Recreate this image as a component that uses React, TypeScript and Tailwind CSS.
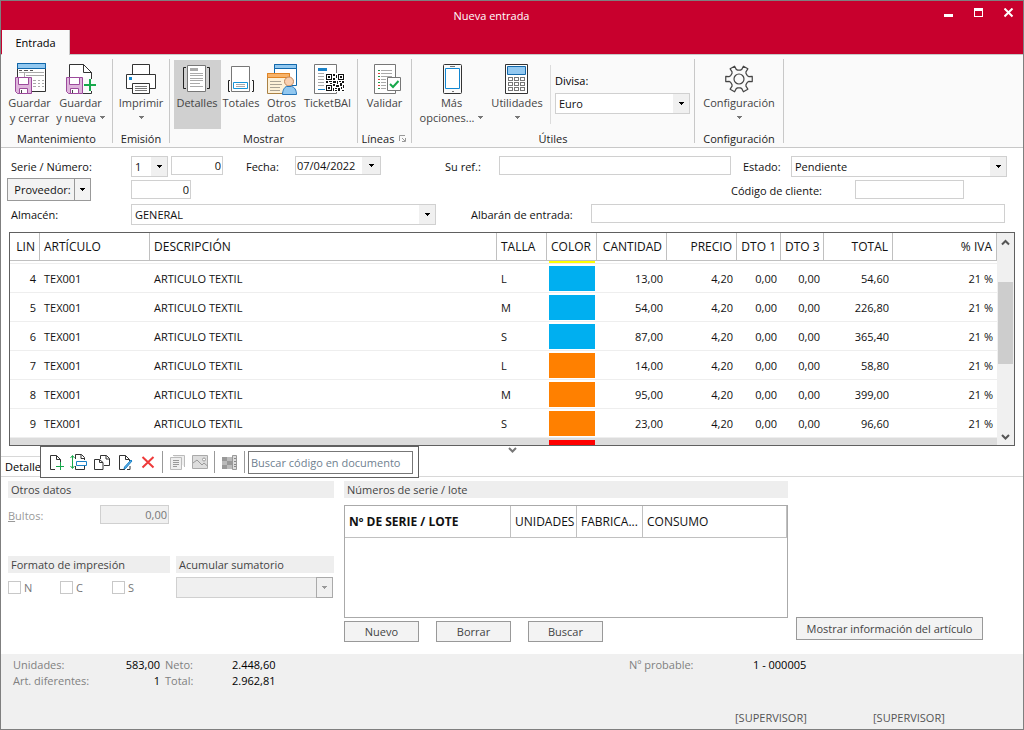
import { useState } from 'react';
import type { ReactNode } from 'react';
import clsx from 'clsx';

const LINES = [
  { lin: 4, talla: 'L', color: 'bg-[#00aff0]', cantidad: '13,00', total: '54,60' },
  { lin: 5, talla: 'M', color: 'bg-[#00aff0]', cantidad: '54,00', total: '226,80' },
  { lin: 6, talla: 'S', color: 'bg-[#00aff0]', cantidad: '87,00', total: '365,40' },
  { lin: 7, talla: 'L', color: 'bg-[#ff8000]', cantidad: '14,00', total: '58,80' },
  { lin: 8, talla: 'M', color: 'bg-[#ff8000]', cantidad: '95,00', total: '399,00' },
  { lin: 9, talla: 'S', color: 'bg-[#ff8000]', cantidad: '23,00', total: '96,60' },
];

const COLUMNS = [
  { label: 'LIN', width: 'w-[30px]', right: true },
  { label: 'ARTÍCULO', width: 'w-[110px]', right: false },
  { label: 'DESCRIPCIÓN', width: '', right: false },
  { label: 'TALLA', width: 'w-[50px]', right: false },
  { label: 'COLOR', width: 'w-[50px]', right: false },
  { label: 'CANTIDAD', width: 'w-[70px]', right: true },
  { label: 'PRECIO', width: 'w-[70px]', right: true },
  { label: 'DTO 1', width: 'w-[44px]', right: true },
  { label: 'DTO 3', width: 'w-[43px]', right: true },
  { label: 'TOTAL', width: 'w-[69px]', right: true },
  { label: '% IVA', width: 'w-[104px]', right: true },
];

/* ---------- Icons ---------- */

function Icon({ children, size = 34 }: { children: ReactNode; size?: number }) {
  return (
    <svg width={size} height={size} viewBox={`0 0 ${size} ${size}`} fill="none" className="shrink-0" aria-hidden="true">
      {children}
    </svg>
  );
}

function Caret({ className = 'fill-black' }: { className?: string }) {
  return (
    <svg width="5" height="3" viewBox="0 0 5 3" className={clsx('shrink-0', className)} shapeRendering="crispEdges" aria-hidden="true">
      <path d="M0 0h5v1H4v1H3v1H2V2H1V1H0z" />
    </svg>
  );
}

function Floppy() {
  return (
    <g>
      <path d="M2.5 16.5h16v16h-14l-2-2z" fill="#dfb6dc" stroke="#9c4a9c" />
      <path d="M5.5 16.5h10v7h-10z" fill="#fff" stroke="#9c4a9c" />
      <path d="M6.5 27.5h8v5h-8z" fill="#fff" stroke="#9c4a9c" />
      <path d="M8.5 29v3" stroke="#444" />
    </g>
  );
}

function SaveCloseIcon() {
  return (
    <Icon>
      <path d="M4.5 2.5h28v28h-28z" fill="#fff" stroke="#333" />
      <path d="M4.5 2.5h28v5h-28z" fill="#92c8f0" stroke="#0f67ab" />
      <path d="M6 9.5h3m2 0h4m2 0h3" stroke="#555" />
      <path d="M6 11.5h25M11.5 12v5M13 14.5h18M20 19.5h3m2 0h2m2 0h2M20 22.5h3m2 0h2m2 0h2M20 25.5h3m2 0h2m2 0h2" stroke="#aaa" />
      <Floppy />
    </Icon>
  );
}

function SaveNewIcon() {
  return (
    <Icon>
      <path d="M5.5 16V3.5h14l8 8V18M19 32.5h8.5V30" fill="#fff" stroke="#333" />
      <path d="M19.5 3.5v8h8z" fill="#fff" stroke="#333" />
      <Floppy />
      <path d="M26 18v12M20 24h12" stroke="#17a84b" strokeWidth="2" />
    </Icon>
  );
}

function PrintIcon() {
  return (
    <Icon>
      <path d="M8.5 13.5v-10h17v10" fill="#fff" stroke="#333" />
      <path d="M2.5 13.5h29v14h-29z" fill="#fff" stroke="#333" />
      <path d="M5 16h3v3H5z" fill="#1287d2" />
      <path d="M8.5 22.5h17v10h-17z" fill="#fff" stroke="#333" />
      <path d="M11 25.5h12m-12 2h12m-12 2h12" stroke="#777" />
    </Icon>
  );
}

function DetailsIcon() {
  return (
    <Icon>
      <path d="M6 6.5H3.5v21H6M27 6.5h2.5v21H27" stroke="#222" />
      <path d="M7.5 4.5h18v26h-18z" fill="#fff" stroke="#777" />
      <path d="M10 7h8v3h-8z" fill="#aaa" />
      <path d="M10 12.5h13m-13 2h13m-13 3h13m-13 2h13m-13 3h10m-10 3h13" stroke="#aaa" />
    </Icon>
  );
}

function TotalsIcon() {
  return (
    <Icon>
      <path d="M6 19.5H4.5v11H6M28 19.5h1.5v11H28" stroke="#222" />
      <path d="M7.5 5.5h18v25h-18z" fill="#fff" stroke="#777" />
      <path d="M9.5 21.5h14v6h-14z" fill="#fff" stroke="#1694d9" />
      <path d="M12 23.5h9m-9 2h9" stroke="#aaa" />
    </Icon>
  );
}

function OtherDataIcon() {
  return (
    <Icon>
      <path d="M9.5 3.5h22v21h-22z" fill="#fff" stroke="#1268ab" />
      <path d="M9.5 3.5h22v4h-22z" fill="#92c8f0" stroke="#1268ab" />
      <path d="M2.5 12.5h22v20h-22z" fill="#fdf1d8" stroke="#a98145" />
      <path d="M2.5 12.5h22v4h-22z" fill="#f8b369" stroke="#e08425" />
      <path d="M5 20.5h11m-11 3h12m-12 3h10m-10 3h10" stroke="#a9a294" />
      <circle cx="24" cy="20.5" r="4.5" fill="#f9d0b0" stroke="#c08860" />
      <path d="M17.5 33.5c0-4 2-7.5 4-8h5c3 .5 5 3.5 5 8z" fill="#92c8f0" stroke="#2675b8" />
    </Icon>
  );
}

function TicketIcon() {
  return (
    <Icon>
      <path d="M3.5 3.5h22v29h-22z" fill="#fff" stroke="#777" />
      <path d="M7 7h9v3H7z" fill="#1a82c8" />
      <path d="M7 12.5h6m-6 3h6m-6 3h6m-6 3h6m-6 3h6" stroke="#aaa" />
      <path d="M7 28.5h7" stroke="#1a82c8" />
      <path d="M14 12h20v19H14z" fill="#fff" />
      <g fill="#111" shapeRendering="crispEdges">
        <path fillRule="evenodd" d="M15 13h6v6h-6zm1 1v4h4v-4zM27 13h6v6h-6zm1 1v4h4v-4zM15 24h6v6h-6zm1 1v4h4v-4z" />
        <path d="M17 15h2v2h-2zM29 15h2v2h-2zM17 26h2v2h-2z" />
        <path d="M22 13h2v2h-2zM25 14h1v3h-1zM22 17h2v2h-2zM15 20h2v2h-2zM18 20h3v1h-3zM19 22h2v1h-2zM22 20h3v2h-3zM26 20h1v3h-1zM28 20h2v1h-2zM31 20h2v2h-2zM22 23h2v2h-2zM25 24h3v2h-3zM29 22h2v3h-2zM32 24h1v3h-1zM22 27h1v3h-1zM24 27h2v1h-2zM27 27h2v3h-2zM24 29h2v1h-2zM30 26h1v2h-1zM31 29h2v1h-2z" />
      </g>
    </Icon>
  );
}

function ValidateIcon() {
  return (
    <Icon>
      <path d="M6.5 3.5h21v29h-21z" fill="#fff" stroke="#777" />
      <path d="M10 9.5h2m-2 6h2m-2 6h2m-2 6h2" stroke="#1a9a4a" />
      <path d="M10 12.5h2m-2 6h2m-2 6h2" stroke="#e0403a" />
      <path d="M13 9.5h11m-11 3h11m-11 3h11m-11 3h5m-5 3h5m-5 3h5m-5 3h5" stroke="#aaa" />
      <path d="M19.5 16.5h13v13h-13z" fill="#fff" stroke="#777" />
      <path d="M22 23l3 3 5.5-6" stroke="#17a84b" strokeWidth="2" />
    </Icon>
  );
}

function PhoneIcon() {
  return (
    <Icon>
      <rect x="8.5" y="3.5" width="18" height="29" rx="1" fill="#fafafa" stroke="#333" />
      <path d="M10.5 7.5h14v20h-14z" fill="#fff" stroke="#1287d2" />
      <path d="M15 5.5h5m-3 25h2" stroke="#777" />
    </Icon>
  );
}

function CalculatorIcon() {
  return (
    <Icon>
      <path d="M5.5 3.5h22v29h-22z" fill="#fff" stroke="#333" />
      <path d="M7.5 5.5h18v8h-18z" fill="#92c8f0" stroke="#1268ab" />
      {[16, 21, 26].map(y =>
        [8, 14, 20].map(x => <rect key={`${x}-${y}`} x={x + 0.5} y={y + 0.5} width="4" height="3" stroke="#777" />)
      )}
    </Icon>
  );
}

// Six teeth, one every 60 degrees
const GEAR_POINTS = [0, 60, 120, 180, 240, 300]
  .flatMap(angle => [[-21, 9], [-14, 10], [-11, 13.5], [11, 13.5], [14, 10], [21, 9]].map(([offset, r]) => {
    const a = ((angle + offset) * Math.PI) / 180;
    return `${(17 + r * Math.cos(a)).toFixed(2)},${(18 + r * Math.sin(a)).toFixed(2)}`;
  }))
  .join(' ');

function GearIcon() {
  return (
    <Icon>
      <polygon points={GEAR_POINTS} stroke="#444" strokeWidth="1.2" strokeLinejoin="round" />
      <circle cx="17" cy="18" r="5" stroke="#444" strokeWidth="1.2" />
    </Icon>
  );
}

/* ---------- Ribbon ---------- */

interface RibbonButtonProps {
  icon: ReactNode;
  lines: string[];
  width: string;
  menu?: boolean;
  active?: boolean;
}

function RibbonButton({ icon, lines, width, menu, active }: RibbonButtonProps) {
  const inlineCaret = menu && lines.length > 1;
  return (
    <button
      type="button"
      className={clsx('flex h-[69px] flex-col items-center whitespace-nowrap pt-px leading-[15px] text-[#444]', width, active ? 'bg-[#d0d0d0]' : 'hover:bg-[#e6e6e6]')}
    >
      {icon}
      {lines.map((line, i) => (
        <span key={line} className="flex items-center gap-1">
          {line}
          {inlineCaret && i === lines.length - 1 && <Caret className="fill-[#777]" />}
        </span>
      ))}
      {menu && !inlineCaret && (
        <span className="flex h-[15px] items-center">
          <Caret className="fill-[#777]" />
        </span>
      )}
    </button>
  );
}

function RibbonGroup({ title, width, launcher, children }: { title: string; width: string; launcher?: boolean; children: ReactNode }) {
  return (
    <>
      <div className={clsx('flex flex-col', width)}>
        <div className="flex h-[70px] justify-center pt-px">{children}</div>
        <div className="flex h-[18px] items-center justify-center gap-1 text-[#222]">
          {title}
          {launcher && (
            <svg width="9" height="9" viewBox="0 0 9 9" fill="none" className="shrink-0" aria-hidden="true">
              <path d="M1.5 7V1.5H7M4 4l3 3M7.5 4v3.5H4" stroke="#999" />
            </svg>
          )}
        </div>
      </div>
      <div className="h-[84px] w-px bg-[#c8c8c8]" />
    </>
  );
}

/* ---------- Form controls ---------- */

function Select({ id, options, className }: { id: string; options: string[]; className?: string }) {
  return (
    <div className={clsx('relative h-[21px] border border-[#d0d0d0] bg-white', className)}>
      <select id={id} className="block h-full w-full appearance-none bg-transparent pr-4 pl-[3px] outline-none">
        {options.map(o => <option key={o}>{o}</option>)}
      </select>
      <span className="pointer-events-none absolute inset-y-0 right-0 flex w-4 items-center justify-center bg-[#f0f0f0]">
        <Caret />
      </span>
    </div>
  );
}

const inputClass = 'h-[19px] border border-[#d0d0d0] bg-white px-1 outline-none';

function PushButton({ children, className }: { children: ReactNode; className: string }) {
  return (
    <button type="button" className={clsx('border border-[#999] bg-[#f3f3f3] whitespace-nowrap text-[#444]', className)}>
      {children}
    </button>
  );
}

function SectionTitle({ children }: { children: ReactNode }) {
  return <h2 className="h-[17px] bg-[#eee] px-[3px] leading-[17px] text-[#444]">{children}</h2>;
}

function DocumentForm() {
  const [fecha, setFecha] = useState('07/04/2022');

  return (
    <div className="pr-4 pl-[10px] pt-2">
      <div className="flex h-[22px] items-start">
        <label htmlFor="serie" className="w-[120px] leading-[22px]">Serie / Número:</label>
        <Select id="serie" options={['1']} className="w-[37px]" />
        <input aria-label="Número" defaultValue="0" className={clsx(inputClass, 'ml-[3px] w-[52px] pr-px text-right')} />
        <label htmlFor="fecha" className="ml-[23px] w-[49px] leading-[22px]">Fecha:</label>
        <div className="flex h-[19px] w-[86px] border border-[#d0d0d0]">
          <input id="fecha" value={fecha} onChange={e => setFecha(e.target.value)} className="w-0 flex-1 pl-px outline-none" />
          <button type="button" aria-label="Abrir calendario" className="flex w-[18px] items-center justify-center bg-[#f0f0f0]">
            <Caret />
          </button>
        </div>
        <label htmlFor="ref" className="ml-16 w-[54px] leading-[22px]">Su ref.:</label>
        <input id="ref" className={clsx(inputClass, 'min-w-0 flex-1')} />
        <label htmlFor="estado" className="ml-3 w-12 leading-[22px]">Estado:</label>
        <Select id="estado" options={['Pendiente']} className="w-[216px]" />
      </div>

      <div className="flex h-[26px] items-start">
        <div className="-ml-1 flex h-[23px] w-[84px] border border-[#999] bg-[#f3f3f3]">
          <button type="button" className="flex-1 border-r border-[#999] pl-[3px]">Proveedor:</button>
          <button type="button" aria-label="Opciones de proveedor" className="flex w-[15px] items-center justify-center">
            <Caret />
          </button>
        </div>
        <input aria-label="Código de proveedor" defaultValue="0" className={clsx(inputClass, 'mt-[2px] ml-10 w-[60px] pr-px text-right')} />
        <label htmlFor="cliente" className="ml-auto w-[124px] leading-[26px]">Código de cliente:</label>
        <input id="cliente" className={clsx(inputClass, 'mt-[2px] mr-[43px] w-[109px]')} />
      </div>

      <div className="flex h-[22px] items-start">
        <label htmlFor="almacen" className="w-[120px] leading-[22px]">Almacén:</label>
        <Select id="almacen" options={['GENERAL']} className="w-[305px]" />
        <label htmlFor="albaran" className="ml-[35px] w-[120px] leading-[22px]">Albarán de entrada:</label>
        <input id="albaran" className={clsx(inputClass, 'mr-[2px] min-w-0 flex-1')} />
      </div>
    </div>
  );
}

function LinesTable() {
  return (
    <div className="mx-2 mt-[6px] flex border border-[#606060] bg-white">
      <table className="w-full flex-1 table-fixed border-separate border-spacing-0">
        <thead>
          <tr className="h-7">
            {COLUMNS.map(c => (
              <th
                key={c.label}
                scope="col"
                className={clsx('border-r border-b border-[#c0c0c0] px-1 py-0 text-[12px] font-normal whitespace-nowrap', c.width, c.right ? 'text-right' : 'text-left')}
              >
                {c.label}
              </th>
            ))}
          </tr>
        </thead>
        <tbody className="[&_td]:py-0">
          {/* Rows scrolled half out of view show only their colour */}
          <tr className="h-[3px] [&>td]:border-b [&>td]:border-[#eee]">
            <td colSpan={4} />
            <td className="px-[2px]"><div className="h-[2px] bg-[#ffff00]" /></td>
            <td colSpan={6} />
          </tr>
          {LINES.map(line => (
            <tr key={line.lin} className="h-[29px] whitespace-nowrap [&>td]:border-b [&>td]:border-[#eee]">
              <td className="px-1 text-right">{line.lin}</td>
              <td className="px-1">TEX001</td>
              <td className="px-1">ARTICULO TEXTIL</td>
              <td className="px-1">{line.talla}</td>
              <td className="px-[2px]"><div className={clsx('h-[25px]', line.color)} /></td>
              <td className="px-1 text-right">{line.cantidad}</td>
              <td className="px-1 text-right">4,20</td>
              <td className="px-1 text-right">0,00</td>
              <td className="px-1 text-right">0,00</td>
              <td className="px-1 text-right">{line.total}</td>
              <td className="px-1 text-right">21 %</td>
            </tr>
          ))}
          <tr className="h-[7px] bg-[#dcdcdc]">
            <td colSpan={4} />
            <td className="px-[2px] align-bottom"><div className="h-[5px] bg-[#ff0000]" /></td>
            <td colSpan={6} />
          </tr>
        </tbody>
      </table>
      <div className="flex w-[17px] shrink-0 flex-col items-center bg-[#f0f0f0]">
        <svg width="9" height="49" viewBox="0 0 9 49" fill="none" aria-hidden="true"><path d="M1 11.5L4.5 8 8 11.5" stroke="#555" strokeWidth="2" /></svg>
        <div className="h-[82px] w-[15px] bg-[#cdcdcd]" />
        <svg width="9" height="14" viewBox="0 0 9 14" fill="none" className="mt-auto" aria-hidden="true"><path d="M1 4l3.5 3.5L8 4" stroke="#555" strokeWidth="2" /></svg>
      </div>
    </div>
  );
}

function ToolButton({ label, children }: { label: string; children: ReactNode }) {
  return (
    <button type="button" aria-label={label} className="flex h-5 w-[23px] items-center justify-center">
      <Icon size={18}>{children}</Icon>
    </button>
  );
}

function FloatingToolbar() {
  return (
    <div className="absolute top-0 left-[39px] flex h-8 w-[379px] items-center border border-[#606060] bg-white pl-[3px]">
      <ToolButton label="Nueva línea">
        <path d="M8 16.5H3.5v-14h6l4 4V9M9.5 2.5v4h4" stroke="#333" />
        <path d="M13.5 9v8M9 13.5h8" stroke="#17a84b" />
      </ToolButton>
      <ToolButton label="Insertar línea">
        <path d="M5.5 6V1.5h6l3 3V7M11 1.5v4h4M5.5 13v3.5h9V13" stroke="#333" />
        <path d="M6.5 8.5h10v4h-10z" fill="#fff" stroke="#1a82c8" />
        <path d="M2.5 3v12M.5 5l2-2.5 2 2.5M.5 13l2 2.5 2-2.5" stroke="#17a84b" />
      </ToolButton>
      <ToolButton label="Duplicar línea">
        <path d="M7.5 6V2.5h6l3 3v7H11M13 2.5V6h3.5" stroke="#333" />
        <path d="M1.5 6.5h5l3.5 3v7H1.5zM6.5 6.5v3H10" fill="#fff" stroke="#333" />
      </ToolButton>
      <ToolButton label="Modificar línea">
        <path d="M9 16.5H3.5v-14h6l4 4V8M9.5 2.5v4h4M14 13v3.5h-3" stroke="#333" />
        <path d="M16 8l-6.5 7.5L8 16l.5-2L15 7z" fill="#5eaee6" stroke="#1a82c8" />
      </ToolButton>
      <ToolButton label="Borrar línea">
        <path d="M3.5 4l11 10.5M14.5 4l-11 10.5" stroke="#ee3a3a" strokeWidth="2" />
      </ToolButton>
      <div className="mr-[2px] ml-[3px] h-[22px] w-px bg-[#999]" />
      <ToolButton label="Notas">
        <path d="M5 2.5h11.5V14M2.5 4.5h11v12h-11z" fill="#eee" stroke="#bbb" />
        <path d="M5 7.5h6m-6 2h6m-6 2h6m-6 2h4" stroke="#999" />
      </ToolButton>
      <ToolButton label="Imagen">
        <path d="M1.5 2.5h15v13h-15z" fill="#ddd" stroke="#aaa" />
        <path d="M2 10l4-3 5 5 2-2 3.5 3" stroke="#999" />
        <circle cx="13" cy="6.5" r="1.5" fill="#fff" stroke="#999" />
      </ToolButton>
      <div className="mx-[3px] h-[22px] w-px bg-[#999]" />
      <ToolButton label="Tallas y colores">
        <path d="M1 4h10v12H1z" fill="#bbb" />
        <path d="M1 4h5v4H1zM6 8h5v4H6zM1 12h5v4H1z" fill="#999" />
        <path d="M11.5 2.5h4v14h-4z" fill="#ddd" stroke="#999" />
        <path d="M13 5.5h2m-2 3h2m-2 3h2m-2 2h2" stroke="#888" />
      </ToolButton>
      <div className="ml-[3px] h-[22px] w-px bg-[#999]" />
      <input
        aria-label="Buscar código en documento"
        placeholder="Buscar código en documento"
        className="mr-[5px] ml-[3px] h-[23px] min-w-0 flex-1 border border-[#777] px-[2px] outline-none placeholder:text-[#6f7f90]"
      />
    </div>
  );
}

function DetailPanel() {
  return (
    <div className="flex pt-1 pb-3 pl-[7px]">
      <div className="w-[326px] shrink-0">
        <SectionTitle>Otros datos</SectionTitle>
        <div className="mt-[7px] flex h-[19px]">
          <label htmlFor="bultos" className="w-[92px] leading-[21px] text-[#999]"><u>B</u>ultos:</label>
          <input id="bultos" disabled defaultValue="0,00" className="w-[69px] border border-[#d0d0d0] bg-[#f0f0f0] pr-px text-right text-[#777]" />
        </div>
        <div className="mt-8 flex gap-[6px]">
          <fieldset className="w-[162px]" disabled>
            <SectionTitle>Formato de impresión</SectionTitle>
            <div className="mt-2 flex">
              {['N', 'C', 'S'].map(f => (
                <label key={f} className="flex h-[13px] w-[52px] items-center gap-[3px] text-[#777]">
                  <input type="checkbox" className="h-[13px] w-[13px] appearance-none border border-[#c8c8c8] bg-white" />
                  {f}
                </label>
              ))}
            </div>
          </fieldset>
          <div className="flex-1">
            <SectionTitle>Acumular sumatorio</SectionTitle>
            <div className="relative mt-1 mr-px h-[21px]">
              <select disabled aria-label="Acumular sumatorio" className="block h-full w-full appearance-none border border-[#d0d0d0] bg-[#f0f0f0] opacity-100" />
              <span className="pointer-events-none absolute inset-y-0 right-0 flex w-[17px] items-center justify-center border border-[#aaa] bg-[#f0f0f0]">
                <Caret className="fill-[#999]" />
              </span>
            </div>
          </div>
        </div>
      </div>

      <div className="ml-[10px] min-w-0 flex-1">
        <SectionTitle>Números de serie / lote</SectionTitle>
        <div className="mt-[7px] h-[113px] border border-[#aaa] text-[12px]">
          <table className="w-full table-fixed border-separate border-spacing-0 text-left">
            <thead>
              <tr className="h-8 whitespace-nowrap [&>th]:border-r [&>th]:border-b [&>th]:border-[#c0c0c0] [&>th]:px-1 [&>th]:py-0">
                <th scope="col" className="w-[166px]">Nº DE SERIE / LOTE</th>
                <th scope="col" className="w-[66px] font-normal">UNIDADES</th>
                <th scope="col" className="w-[66px] font-normal">FABRICA...</th>
                <th scope="col" className="font-normal">CONSUMO</th>
              </tr>
            </thead>
          </table>
        </div>
        <div className="mt-[3px] flex gap-[17px]">
          <PushButton className="h-[21px] w-[75px]">Nuevo</PushButton>
          <PushButton className="h-[21px] w-[75px]">Borrar</PushButton>
          <PushButton className="h-[21px] w-[75px]">Buscar</PushButton>
        </div>
      </div>

      <div className="flex w-[235px] shrink-0 flex-col justify-end pb-[2px] pl-2">
        <PushButton className="h-[23px] w-[187px]">Mostrar información del artículo</PushButton>
      </div>
    </div>
  );
}

function StatusFooter() {
  return (
    <footer className="flex flex-1 flex-col bg-[#f0f0f0] px-3 pt-[3px] leading-4">
      <div className="flex">
        <dl className="grid grid-cols-[87px_60px_72px_44px] text-[#808080]">
          <dt>Unidades:</dt>
          <dd className="text-right text-black">583,00</dd>
          <dt className="pl-[5px]">Neto:</dt>
          <dd className="text-black">2.448,60</dd>
          <dt>Art. diferentes:</dt>
          <dd className="text-right text-black">1</dd>
          <dt className="pl-[5px]">Total:</dt>
          <dd className="text-black">2.962,81</dd>
        </dl>
        <div className="ml-auto flex w-[382px]">
          <span className="w-[124px] text-[#808080]">Nº probable:</span>
          <span className="text-black">1 - 000005</span>
        </div>
      </div>
      <div className="mt-auto flex justify-end pb-[3px] text-[#555]">
        <span className="w-[138px]">[SUPERVISOR]</span>
        <span className="w-[138px]">[SUPERVISOR]</span>
      </div>
    </footer>
  );
}

export default function App() {
  return (
    <div className="flex min-h-screen flex-col border border-[#7f7f7f] bg-white font-['Open_Sans','Noto_Sans',sans-serif] text-[11px] leading-[15px] text-[#111]">
      {/* Title bar */}
      <header className="flex h-[29px] items-start bg-[#c8002d] text-white">
        <h1 className="flex-1 pt-[7px] pl-11 text-center">Nueva entrada</h1>
        <div className="flex gap-[9px] pt-[7px] pr-1">
          <button type="button" aria-label="Minimizar" className="flex w-[21px] justify-center">
            <svg width="10" height="10" viewBox="0 0 10 10" aria-hidden="true"><path d="M0 6h9v3H0z" fill="#fff" /></svg>
          </button>
          <button type="button" aria-label="Maximizar" className="flex w-[21px] justify-center">
            <svg width="10" height="10" viewBox="0 0 10 10" aria-hidden="true"><path d="M0 0h9v9H0zM1 3v5h7V3z" fill="#fff" fillRule="evenodd" /></svg>
          </button>
          <button type="button" aria-label="Cerrar" className="flex w-[21px] justify-center">
            <svg width="10" height="10" viewBox="0 0 10 10" fill="none" aria-hidden="true"><path d="M.5.5l8 8M8.500.5l-8 8" stroke="#fff" strokeWidth="2" /></svg>
          </button>
        </div>
      </header>

      {/* Ribbon tabs */}
      <nav className="flex h-[25px] bg-[#c8002d]">
        <div className="w-px border-b border-[#c8c8c8]" />
        <button type="button" className="w-[68px] border-r border-[#c8c8c8] bg-[#fafafa] text-black">Entrada</button>
        <div className="flex-1 border-b border-[#c8c8c8]" />
      </nav>

      {/* Ribbon */}
      <div className="flex h-[93px] border-b border-[#c8c8c8] bg-[#fafafa] pt-1">
        <RibbonGroup title="Mantenimiento" width="w-[111px]">
          <RibbonButton icon={<SaveCloseIcon />} lines={['Guardar', 'y cerrar']} width="w-[50px]" />
          <RibbonButton icon={<SaveNewIcon />} lines={['Guardar', 'y nueva']} width="mr-[2px] w-[52px]" menu />
        </RibbonGroup>
        <RibbonGroup title="Emisión" width="w-14">
          <RibbonButton icon={<PrintIcon />} lines={['Imprimir']} width="w-[50px]" menu />
        </RibbonGroup>
        <RibbonGroup title="Mostrar" width="w-[187px]">
          <RibbonButton icon={<DetailsIcon />} lines={['Detalles']} width="w-[47px]" active />
          <RibbonButton icon={<TotalsIcon />} lines={['Totales']} width="w-[41px]" />
          <RibbonButton icon={<OtherDataIcon />} lines={['Otros', 'datos']} width="w-[40px]" />
          <RibbonButton icon={<TicketIcon />} lines={['TicketBAI']} width="w-[52px]" />
        </RibbonGroup>
        <RibbonGroup title="Líneas" width="w-[53px]" launcher>
          <RibbonButton icon={<ValidateIcon />} lines={['Validar']} width="w-[46px]" />
        </RibbonGroup>
        <RibbonGroup title="Útiles" width="w-[282px]">
          <RibbonButton icon={<PhoneIcon />} lines={['Más', 'opciones...']} width="w-[71px]" menu />
          <RibbonButton icon={<CalculatorIcon />} lines={['Utilidades']} width="w-[60px]" menu />
          <div className="mr-1 ml-[3px] mt-[5px] h-[59px] w-px bg-[#dcdcdc]" />
          <div className="w-[135px] pt-[13px]">
            <label htmlFor="divisa" className="block h-5 text-black">Divisa:</label>
            <Select id="divisa" options={['Euro']} />
          </div>
        </RibbonGroup>
        <RibbonGroup title="Configuración" width="w-[88px]">
          <RibbonButton icon={<GearIcon />} lines={['Configuración']} width="w-[80px]" menu />
        </RibbonGroup>
      </div>

      <DocumentForm />
      <LinesTable />

      {/* Detail tab strip, with the line toolbar hanging over it */}
      <div className="relative flex h-[31px] justify-center border-b border-[#d8d8d8]">
        <svg width="9" height="9" viewBox="0 0 9 9" fill="none" aria-hidden="true"><path d="M1 2l3.5 3.5L8 2" stroke="#777" strokeWidth="2" /></svg>
        <button type="button" className="absolute bottom-0 left-0 h-5 w-[46px] border-t border-[#d8d8d8] pl-1 text-left text-black">Detalle</button>
        <FloatingToolbar />
      </div>

      <DetailPanel />
      <StatusFooter />
    </div>
  );
}
